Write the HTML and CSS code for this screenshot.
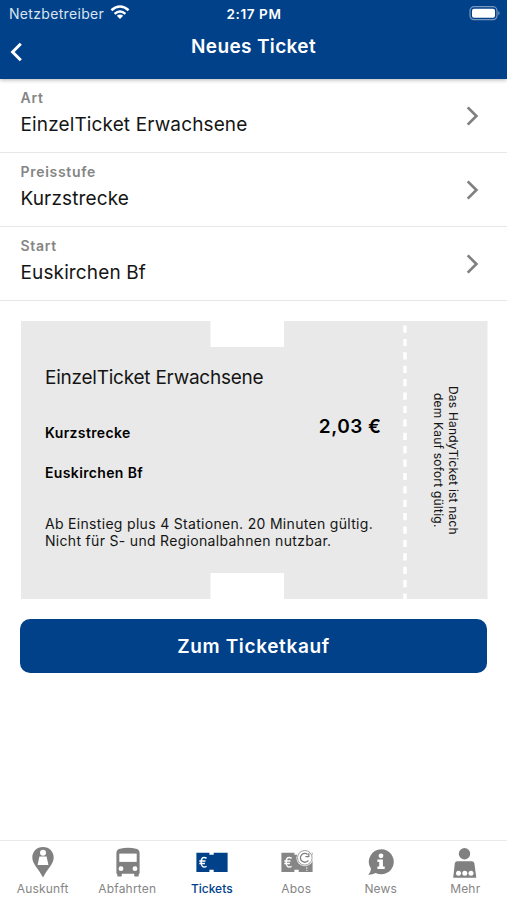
FILE: index.html
```html
<!DOCTYPE html>
<html lang="de">
<head>
<meta charset="utf-8">
<title>Neues Ticket</title>
<link rel="stylesheet" href="styles.css">
</head>
<body>
<div class="app">
  <header class="header">
    <div class="status">
      <div class="carrier"><span>Netzbetreiber</span>
        <svg width="20" height="15" viewBox="0 0 20 15"><g fill="none" stroke="#fff" stroke-width="2.5"><path d="M1.4 5.3Q10-2.2 18.6 5.3"/><path d="M4.6 8.9Q10 4.1 15.4 8.9"/></g><path d="M6.8 10.8Q10 8.2 13.2 10.8L10 14Z" fill="#fff"/></svg>
      </div>
      <span class="time">2:17 PM</span>
      <svg class="battery" width="32" height="15" viewBox="0 0 32 15"><rect x="1" y=".7" width="27" height="13" rx="4" fill="none" stroke="#7996bd" stroke-width="1.2"/><rect x="3" y="2.7" width="23" height="9" rx="2" fill="#fff"/><path d="M29.3 5Q32 7.2 29.3 9.4Z" fill="#7996bd"/></svg>
    </div>
    <div class="navbar">
      <svg class="back" width="13" height="20" viewBox="0 0 13 20"><path d="M10.8 1.7 2.6 10l8.2 8.3" fill="none" stroke="#fff" stroke-width="3"/></svg>
      <h1>Neues Ticket</h1>
    </div>
  </header>
  <main>
    <section class="options">
      <div class="row"><div><div class="label">Art</div><div class="value">EinzelTicket Erwachsene</div></div><svg class="chevron" width="13" height="20" viewBox="0 0 13 20"><path d="m1.7 1.4 8.7 8.6-8.7 8.6"/></svg></div>
      <div class="row"><div><div class="label">Preisstufe</div><div class="value">Kurzstrecke</div></div><svg class="chevron" width="13" height="20" viewBox="0 0 13 20"><path d="m1.7 1.4 8.7 8.6-8.7 8.6"/></svg></div>
      <div class="row"><div><div class="label">Start</div><div class="value">Euskirchen Bf</div></div><svg class="chevron" width="13" height="20" viewBox="0 0 13 20"><path d="m1.7 1.4 8.7 8.6-8.7 8.6"/></svg></div>
    </section>
    <section class="ticket">
      <div class="details">
        <h2>EinzelTicket Erwachsene</h2>
        <div class="fare">
          <div class="trip"><div>Kurzstrecke</div><div>Euskirchen Bf</div></div>
          <div class="price">2,03 €</div>
        </div>
        <p class="note">Ab Einstieg plus 4 Stationen. 20 Minuten gültig.<br>Nicht für S- und Regionalbahnen nutzbar.</p>
      </div>
      <svg class="perforation" width="4" height="278" viewBox="0 0 4 278"><path d="M2 4.5V278" stroke="#fff" stroke-width="3.4" stroke-dasharray="7.2 6.2"/></svg>
      <div class="stub"><p>Das HandyTicket ist nach<br>dem Kauf sofort gültig.</p></div>
    </section>
    <button class="buy">Zum Ticketkauf</button>
  </main>
  <nav class="tabs">
    <div class="tab"><svg width="34" height="34" viewBox="-1 0 34 34"><path d="M17 1C10.5 1 6.3 5.8 6.3 11.4 6.3 18 12.2 22 17 31.4 21.8 22 27.7 18 27.7 11.4 27.7 5.8 23.5 1 17 1Z" fill="#808080"/><circle cx="17" cy="6.7" r="3" fill="#fff"/><path d="M13.4 10.6h7.2l1.8 8.4H11.6Z" fill="#fff"/></svg><span>Auskunft</span></div>
    <div class="tab"><svg width="34" height="34" viewBox="-1 0 34 34"><path d="M9 2.8Q17 .8 25 2.8 28.6 3.6 28.6 7V27.8H27.8V29.5Q27.8 30.4 26.8 30.4H24.2Q23.2 30.4 23.2 29.5V27.8H10.8V29.5Q10.8 30.4 9.8 30.4H7.2Q6.2 30.4 6.2 29.5V27.8H5.4V7Q5.4 3.6 9 2.8Z" fill="#808080"/><rect x="8.3" y="7.6" width="17.4" height="8.3" fill="#fff"/><circle cx="10" cy="22.7" r="2.4" fill="#fff"/><circle cx="24" cy="22.7" r="2.4" fill="#fff"/></svg><span>Abfahrten</span></div>
    <div class="tab active"><svg width="34" height="34" viewBox="-1 0 34 34"><path d="M1.4 6.8H14.4V8.7H18.7V6.8H32.6V25.9H18.7V23.8H14.4V25.9H1.4Z" fill="#00418a"/><path d="M11.6 12.2Q6.2 9.7 6.2 16.2T11.6 20.4M4.3 15h6.2M4.3 17.4h5.6" fill="none" stroke="#fff" stroke-width="1.5"/></svg><span>Tickets</span></div>
    <div class="tab"><svg width="34" height="34" viewBox="-1 0 34 34"><path d="M1.4 6.8H14.4V8.7H18.7V6.8H32.6V25.9H18.7V23.8H14.4V25.9H1.4Z" fill="#868686"/><path d="M11.6 12.2Q6.2 9.7 6.2 16.2T11.6 20.4M4.3 15h6.2M4.3 17.4h5.6" fill="none" stroke="#fff" stroke-width="1.5"/><circle cx="24.8" cy="11.8" r="8.4" fill="#fff"/><circle cx="24.8" cy="11.8" r="7.3" fill="#fff" stroke="#888" stroke-width=".8"/><path d="M27.6 8.4A4.4 4.4 0 1 0 28.4 14.4M28.8 7.2v3.4h-3.4" fill="none" stroke="#808080" stroke-width="1.3"/><path d="M26.8 21.2v1.5M26.8 23.8v1" stroke="#fff"/></svg><span>Abos</span></div>
    <div class="tab"><svg width="34" height="34" viewBox="-1 0 34 34"><path d="M17.3 3.3A12.5 12.5 0 1 1 11.7 27Q8.5 28.9 4.2 28.8 6.8 26.3 7 22.8A12.5 12.5 0 0 1 17.3 3.3Z" fill="#808080"/><circle cx="17" cy="9.8" r="2.4" fill="#fff"/><path d="M13.4 13.4h5.5v7h1.8v2.7h-7.3v-2.7h1.8v-4.3h-1.8Z" fill="#fff"/></svg><span>News</span></div>
    <div class="tab"><svg width="34" height="34" viewBox="0 0 34 34"><circle cx="16.5" cy="7.7" r="5.7" fill="#808080"/><path d="M9.2 15.2H23.8Q26 15.2 26.4 17.5L28.3 31.8H5.2L6.8 17.5Q7.2 15.2 9.2 15.2Z" fill="#808080"/><g fill="#fff"><circle cx="10.5" cy="27.3" r="2.5"/><circle cx="16.8" cy="27.3" r="2.5"/><circle cx="23" cy="27.3" r="2.5"/></g></svg><span>Mehr</span></div>
  </nav>
</div>
</body>
</html>
```
FILE: styles.css
```css
* { box-sizing: border-box; }
body { margin: 0; background: #fff; font-family: Inter, sans-serif; color: #151515; }
h1, h2, p { margin: 0; }
svg { display: block; flex: none; }
.app { height: 900px; display: flex; flex-direction: column; }
.header { height: 79px; background: #00418a; color: #fff; box-shadow: 0 1px 4px rgba(0,0,0,.3); }
.status { height: 28px; display: grid; grid-template-columns: 1fr auto 1fr; align-items: center; padding: 0 6px 0 9px; font-size: 14px; line-height: 28px; }
.carrier { display: flex; align-items: center; gap: 6px; color: #d9e4f0; letter-spacing: .32px; }
.carrier svg { margin-top: -3px; }
.time { font-weight: 600; font-size: 13.5px; letter-spacing: .6px; margin-left: -2px; }
.battery { justify-self: end; margin-top: -1px; }
.navbar { display: grid; grid-template-columns: 40px 1fr 40px; }
.back { margin: 14px 0 0 10px; }
h1 { text-align: center; font-size: 19px; line-height: 37px; font-weight: 600; letter-spacing: .35px; }
.row { height: 74px; border-bottom: 1px solid #e7e7e7; display: flex; justify-content: space-between; padding: 9px 28px 0 20.5px; }
.label { color: #858585; font-size: 14px; line-height: 20px; font-weight: 600; letter-spacing: .7px; }
.value { font-size: 19px; line-height: 34px; letter-spacing: .13px; }
.chevron { margin-top: 17.5px; fill: none; stroke: #808080; stroke-width: 2.7; }
.ticket { margin: 20px 19.5px 0 20.5px; height: 278px; background: #e9e9e9; display: flex; clip-path: polygon(0 0,190px 0,190px 26px,263.5px 26px,263.5px 0,100% 0,100% 100%,263.5px 100%,263.5px 252px,190px 252px,190px 100%,0 100%); }
.details { width: 382px; padding: 43px 21px 0 24.5px; }
h2 { font-size: 19px; line-height: 28px; font-weight: 400; letter-spacing: -.24px; }
.fare { display: flex; justify-content: space-between; margin-top: 31px; }
.trip { display: grid; gap: 20px; font-size: 14px; line-height: 20px; font-weight: 600; color: #000; letter-spacing: .36px; }
.price { font-size: 19px; line-height: 26px; margin-top: -9px; font-weight: 600; letter-spacing: .5px; color: #000; }
.note { font-size: 14px; line-height: 17.5px; margin-top: 31.5px; white-space: nowrap; letter-spacing: .31px; }
.stub { flex: 1; display: grid; place-items: center; padding-right: 3px; }
.stub p { writing-mode: vertical-rl; text-align: center; font-size: 12px; line-height: 15px; letter-spacing: .2px; }
.buy { display: block; width: 467px; height: 54px; margin: 20px 0 0 20px; border: 0; border-radius: 10px; background: #00418a; color: #fff; font: 600 19px/54px Inter, sans-serif; letter-spacing: .65px; }
.tabs { margin-top: auto; height: 60px; border-top: 1px solid #e9e9e9; display: grid; grid-template-columns: repeat(6, 1fr); }
.tab { display: flex; flex-direction: column; align-items: center; padding-top: 5px; font-size: 12px; line-height: 18px; color: #858585; letter-spacing: .18px; }
.tab span { margin-left: 1px; }
.active { color: #00418a; font-weight: 500; letter-spacing: 0; }
```
